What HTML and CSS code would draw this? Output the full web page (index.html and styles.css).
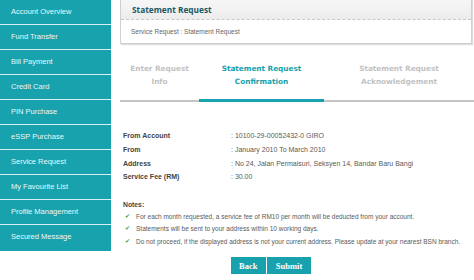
FILE: index.html
```html
<!DOCTYPE html>
<html lang="en">
<head>
    <meta charset="UTF-8">
    <title>Statement Request</title>
    <link rel="stylesheet" href="styles.css">
</head>
<body>
    <div class="page">
        <!-- Sidebar -->
        <ul class="side-menu">
            <li>Account Overview</li>
            <li>Fund Transfer</li>
            <li>Bill Payment</li>
            <li>Credit Card</li>
            <li>PIN Purchase</li>
            <li>eSSP Purchase</li>
            <li>Service Request</li>
            <li>My Favourite List</li>
            <li>Profile Management</li>
            <li>Secured Message</li>
        </ul>

        <!-- Main Content -->
        <div class="main">
            <div class="title-box">
                <div class="title-bar">Statement Request</div>
                <div class="breadcrumb">Service Request : Statement Request</div>
            </div>

            <div class="steps">
                <div class="step">Enter Request<br>Info</div>
                <div class="step active">Statement Request<br>Confirmation</div>
                <div class="step">Statement Request<br>Acknowledgement</div>
            </div>

            <table class="details">
                <tr><th>From Account</th><td>: 10100-29-00052432-0 GIRO</td></tr>
                <tr><th>From</th><td>: January 2010 To March 2010</td></tr>
                <tr><th>Address</th><td>: No 24, Jalan Permaisuri, Seksyen 14, Bandar Baru Bangi</td></tr>
                <tr><th>Service Fee (RM)</th><td>: 30.00</td></tr>
            </table>

            <div class="notes">
                <div class="notes-title">Notes:</div>
                <ul>
                    <li>For each month requested, a service fee of RM10 per month will be deducted from your account.</li>
                    <li>Statements will be sent to your address within 10 working days.</li>
                    <li>Do not proceed, if the displayed address is not your current address. Please update at your nearest BSN branch.</li>
                </ul>
            </div>

            <div class="actions">
                <button class="btn back">Back</button>
                <button class="btn">Submit</button>
            </div>
        </div>
    </div>
</body>
</html>
```

FILE: styles.css
```css
:root {
    --teal: #18a2ad;
    --teal-dark: #1b5866;
    --line-grey: #c4c4c4;
    --text: #5a5a5a;
}

body {
    margin: 0;
    background: #fff;
    font-family: 'Liberation Sans', Arial, sans-serif;
    overflow: hidden;
}

.page {
    display: flex;
    align-items: flex-start;
    height: 280px;
}

/* Sidebar */
.side-menu {
    list-style: none;
    margin: 0;
    padding: 0;
    width: 111px;
    flex-shrink: 0;
    background: var(--teal);
}

.side-menu li {
    height: 24px;
    line-height: 24px;
    padding-left: 11px;
    border-bottom: 1px solid #d8eff1;
    color: #eaf7f8;
    font-size: 7.5px;
}

.side-menu li:last-child {
    border-bottom: none;
    height: 26px;
}

/* Main */
.main {
    flex: 1;
    padding-left: 9px;
}

.title-box {
    width: 350px;
    margin-top: -2px;
    border: 1px solid #cfcfcf;
    box-shadow: 1px 1px 1px #ddd;
}

.title-bar {
    height: 20px;
    line-height: 22px;
    padding-left: 11px;
    background: linear-gradient(#f7f7f7, #ececec);
    border-bottom: 1px dashed #c8c8c8;
    color: var(--teal-dark);
    font-family: 'Open Sans', sans-serif;
    font-weight: bold;
    font-size: 8.3px;
}

.breadcrumb {
    height: 23px;
    line-height: 24px;
    padding-left: 10px;
    font-size: 6.5px;
    color: #666;
}

/* Steps */
.steps {
    display: grid;
    grid-template-columns: 79px 125px 1fr;
    margin-top: 19px;
}

.step {
    height: 37px;
    text-align: center;
    font-family: 'DejaVu Sans', sans-serif;
    font-weight: bold;
    font-size: 7.3px;
    line-height: 12.5px;
    color: #c2c2c2;
    border-bottom: 2px solid var(--line-grey);
}

.step.active {
    color: var(--teal);
    border-bottom: 3px solid var(--teal);
    height: 36px;
}

/* Details */
.details {
    margin-top: 27px;
    border-collapse: collapse;
    font-size: 7px;
}

.details th {
    width: 108px;
    padding: 0 0 0 3px;
    height: 13.7px;
    text-align: left;
    color: #444;
    font-size: 7px;
}

.details td {
    padding: 0;
    color: var(--text);
}

/* Notes */
.notes {
    margin-top: 17px;
    padding-left: 3px;
    font-size: 6.5px;
    color: var(--text);
}

.notes-title {
    font-weight: bold;
    color: #444;
    font-size: 6.8px;
    margin-bottom: 3px;
}

.notes ul {
    list-style: none;
    margin: 0;
    padding: 0;
}

.notes li {
    position: relative;
    padding-left: 13px;
    height: 12.5px;
    line-height: 12px;
    white-space: nowrap;
}

.notes li::before {
    content: "\2714";
    position: absolute;
    left: 2px;
    top: -1px;
    color: #3f9c2a;
    font-size: 6px;
}

/* Buttons */
.actions {
    display: flex;
    justify-content: center;
    gap: 1px;
    margin-top: 9px;
    padding-right: 52px;
}

.btn {
    height: 17px;
    padding: 0 9px;
    border: none;
    background: var(--teal);
    color: #fff;
    font-family: 'Liberation Serif', serif;
    font-weight: bold;
    font-size: 8.5px;
}

.btn.back {
    width: 35px;
    padding: 0;
}
```
